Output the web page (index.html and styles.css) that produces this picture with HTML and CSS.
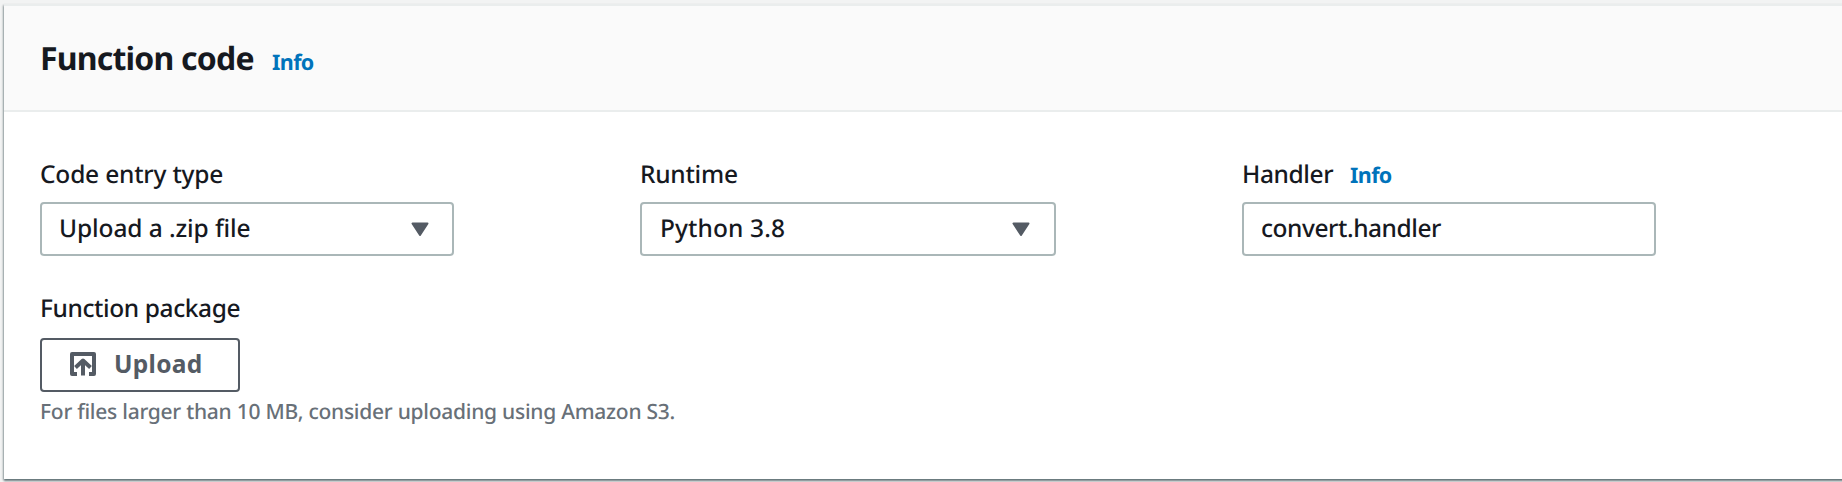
FILE: index.html
```html
<!DOCTYPE html>
<html lang="en">
<head>
<meta charset="utf-8">
<title>Function code</title>
<link rel="stylesheet" href="styles.css">
</head>
<body>
<section class="panel">
  <header class="panel-header">
    <h2 class="title">Function code</h2>
    <a class="info">Info</a>
  </header>
  <div class="panel-body">
    <div class="fields">
      <div class="field">
        <div class="label"><span class="t-entry">Code entry type</span></div>
        <div class="control"><span class="t-zip">Upload a .zip file</span>
          <svg class="caret" width="18" height="15" viewBox="0 0 18 15"><path d="M1.500 1.500h15L9 13z"/></svg>
        </div>
      </div>
      <div class="field field-wide">
        <div class="label"><span class="t-runtime">Runtime</span></div>
        <div class="control control-wide"><span class="t-python">Python 3.8</span>
          <svg class="caret" width="18" height="15" viewBox="0 0 18 15"><path d="M1.500 1.500h15L9 13z"/></svg>
        </div>
      </div>
      <div class="field">
        <div class="label"><span class="t-handler">Handler</span><a class="info">Info</a></div>
        <div class="control"><span class="t-convert">convert.handler</span></div>
      </div>
    </div>
    <div class="label label-package"><span class="t-package">Function package</span></div>
    <button class="upload" type="button">
      <svg class="upload-icon" width="28" height="26" viewBox="0 0 28 26"><path d="M8 23H3V3h22v20h-5M14 24.500V10M6.500 16.500 14 9.500l7.500 7"/></svg>
      <span class="t-upload">Upload</span>
    </button>
    <p class="hint">For files larger than 10 MB, consider uploading using Amazon S3.</p>
  </div>
</section>
</body>
</html>
```
FILE: styles.css
```css
* { box-sizing: border-box; }
body {
  margin: 0;
  height: 482px;
  padding: 4px 0 2px 4px;
  overflow: hidden;
  background: #f2f3f3;
  color: #16191f;
  font-family: "Noto Sans", "Open Sans", sans-serif;
  text-rendering: geometricPrecision;
}
.panel {
  height: 475px;
  margin-right: -8px;
  background: #fff;
  border-top: 2px solid #eaeded;
  box-shadow: 0 2px 2px rgba(0, 28, 36, .5), -1px 1px 2px rgba(0, 28, 36, .25);
}
.panel-header {
  display: flex;
  align-items: baseline;
  height: 106px;
  padding: 31px 36px 0;
  background: #fafafa;
  border-bottom: 2px solid #eaeded;
}
.title {
  margin: 0;
  width: 232px;
  font-size: 32px;
  line-height: 44px;
  font-weight: 700;
  letter-spacing: -.8px;
  white-space: nowrap;
}
.info {
  color: #0073bb;
  font-size: 21.5px;
  line-height: 30px;
  font-weight: 700;
  letter-spacing: -.6px;
}
.panel-body { padding: 47px 36px 0; }
.fields { display: flex; gap: 186px; }
.field { width: 414px; }
.field-wide { width: 416px; }
.label {
  display: flex;
  align-items: baseline;
  height: 43px;
  font-size: 24.5px;
  line-height: 32px;
  font-weight: 500;
  letter-spacing: -.2px;
  white-space: nowrap;
}
.t-handler { width: 108px; letter-spacing: -.4px; }
.t-runtime { letter-spacing: -.25px; }
.t-package { letter-spacing: -.4px; }
.control {
  display: flex;
  align-items: center;
  justify-content: space-between;
  height: 54px;
  padding: 0 23px 0 17px;
  border: 2px solid #aab7b8;
  border-radius: 4px;
  font-size: 24.5px;
  line-height: 32px;
  font-weight: 500;
  letter-spacing: -.1px;
  white-space: nowrap;
}
.control-wide { padding: 0 24px 0 18px; }
.t-python { letter-spacing: .1px; }
.t-convert { letter-spacing: -.45px; }
.caret {
  fill: #545b64;
  stroke: #545b64;
  stroke-width: 2;
  stroke-linejoin: round;
}
.label-package { margin-top: 37px; height: 45px; }
.upload {
  display: flex;
  align-items: center;
  width: 200px;
  height: 54px;
  padding: 0 0 3px 27px;
  gap: 17px;
  background: #fff;
  border: 2px solid #545b64;
  border-radius: 4px;
  color: #545b64;
  font: 700 24.5px/32px "Noto Sans", "Open Sans", sans-serif;
  letter-spacing: .3px;
}
.upload-icon { fill: none; stroke: #545b64; stroke-width: 4; stroke-linejoin: round; }
.hint {
  margin: 5px 0 0;
  color: #687078;
  font-size: 21px;
  line-height: 30px;
  font-weight: 500;
  letter-spacing: -.26px;
  white-space: nowrap;
}
```
